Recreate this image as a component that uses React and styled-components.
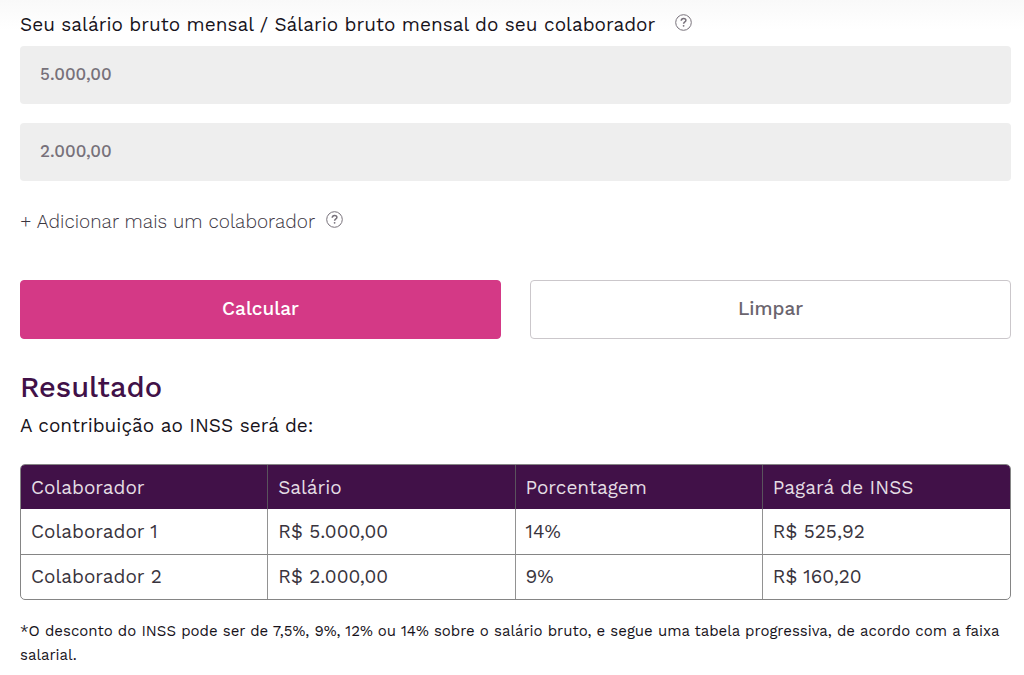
import React, { useState } from 'react';
import styled, { createGlobalStyle } from 'styled-components';

const GlobalStyle = createGlobalStyle`
  *, *::before, *::after { box-sizing: border-box; }
  body {
    margin: 0;
    background: #fff;
    color: #17131b;
    font-family: "Work Sans", Inter, "Open Sans", sans-serif;
    font-size: 19px;
    line-height: 24px;
  }
`;

const Page = styled.main`
  padding: 13px 13px 8px 20px;
  background: linear-gradient(#f9f9f9, #fff 30px);
`;

const LabelRow = styled.div`
  display: flex;
  align-items: flex-start;
  gap: ${({ $gap }) => $gap}px;
`;

const HelpButton = styled.button`
  display: flex;
  margin: 1px 0 0;
  padding: 0;
  border: 0;
  background: none;
  color: #77717a;
  cursor: pointer;
`;

const Fields = styled.div`
  display: flex;
  flex-direction: column;
  gap: 19px;
  margin: 9px 0 29px;
`;

const Field = styled.input`
  width: 100%;
  height: 58px;
  padding: 0 20px 2px;
  border: 0;
  border-radius: 4px;
  background: #eee;
  color: #77717a;
  font: 500 17px/24px "Work Sans", Inter, "Open Sans", sans-serif;
`;

const AddButton = styled.button`
  padding: 0;
  border: 0;
  background: none;
  color: #3b363f;
  font: inherit;
  font-weight: 300;
  cursor: pointer;
`;

const Actions = styled.div`
  display: grid;
  grid-template-columns: 1fr 1fr;
  gap: 29px;
  margin: 46px 0 32px;
`;

const ActionButton = styled.button`
  height: 59px;
  padding: 0 20px 2px;
  border: 1px solid ${({ $primary }) => ($primary ? '#d43986' : '#cbc7cb')};
  border-radius: 4px;
  background: ${({ $primary }) => ($primary ? '#d43986' : '#fff')};
  color: ${({ $primary }) => ($primary ? '#fff' : '#6b656e')};
  font: inherit;
  font-weight: 500;
  cursor: pointer;
`;

const Title = styled.h2`
  margin: 0;
  color: #411148;
  font-size: 29px;
  font-weight: 500;
  line-height: 32px;
`;

const Lead = styled.p`
  margin: 11px 0 26px;
`;

const ResultTable = styled.table`
  width: 100%;
  table-layout: fixed;
  border: 1px solid #858585;
  border-radius: 5px;
  border-spacing: 0;
  overflow: hidden;
  color: #39343d;
  text-align: left;

  th, td {
    height: 45px;
    padding: 0 10px;
    border-right: 1px solid #929292;
  }
  th {
    height: 44px;
    padding-top: 2px;
    border-right-color: #5a535d;
    background: #411148;
    color: #e4dde4;
    font-weight: 400;
  }
  th:last-child, td:last-child { border-right: 0; }
  tr + tr td { border-top: 1px solid #858585; }
`;

const Footnote = styled.p`
  margin: 19px 0 0;
  font-size: 15px;
`;

const HelpIcon = () => (
  <svg width="17" height="17" viewBox="0 0 17 17" fill="none" stroke="currentColor" aria-hidden="true">
    <circle cx="8.5" cy="8.5" r="7.8" strokeWidth="1" />
    <path d="M6.2 6.7C6.3 5.3 7.2 4.5 8.6 4.5C10 4.5 10.9 5.3 10.9 6.4C10.9 8 8.6 7.9 8.6 9.8" strokeWidth="1.5" />
    <circle cx="8.6" cy="11.8" r="0.9" fill="currentColor" stroke="none" />
  </svg>
);

const Help = ({ label }) => (
  <HelpButton type="button" aria-label={label}>
    <HelpIcon />
  </HelpButton>
);

const columns = ['Colaborador', 'Salário', 'Porcentagem', 'Pagará de INSS'];
const results = [
  ['Colaborador 1', 'R$ 5.000,00', '14%', 'R$ 525,92'],
  ['Colaborador 2', 'R$ 2.000,00', '9%', 'R$ 160,20'],
];

export default function App() {
  const [salaries, setSalaries] = useState(['5.000,00', '2.000,00']);

  const updateSalary = (index, value) =>
    setSalaries((current) => current.map((item, i) => (i === index ? value : item)));

  return (
    <>
      <GlobalStyle />
      <Page>
        <form onSubmit={(event) => event.preventDefault()}>
          <LabelRow $gap={20}>
            <label id="salary-label" htmlFor="salary-0">
              Seu salário bruto mensal / Sálario bruto mensal do seu colaborador
            </label>
            <Help label="Ajuda sobre o salário bruto" />
          </LabelRow>
          <Fields>
            {salaries.map((salary, index) => (
              <Field
                key={index}
                id={`salary-${index}`}
                aria-labelledby="salary-label"
                inputMode="decimal"
                value={salary}
                onChange={(event) => updateSalary(index, event.target.value)}
              />
            ))}
          </Fields>
          <LabelRow $gap={11}>
            <AddButton type="button" onClick={() => setSalaries((current) => [...current, ''])}>
              + Adicionar mais um colaborador
            </AddButton>
            <Help label="Ajuda sobre colaboradores" />
          </LabelRow>
          <Actions>
            <ActionButton type="submit" $primary>Calcular</ActionButton>
            <ActionButton type="button" onClick={() => setSalaries((current) => current.map(() => ''))}>
              Limpar
            </ActionButton>
          </Actions>
        </form>
        <section>
          <Title>Resultado</Title>
          <Lead>A contribuição ao INSS será de:</Lead>
          <ResultTable>
            <thead>
              <tr>
                {columns.map((column) => <th key={column} scope="col">{column}</th>)}
              </tr>
            </thead>
            <tbody>
              {results.map((row) => (
                <tr key={row[0]}>
                  {row.map((cell) => <td key={cell}>{cell}</td>)}
                </tr>
              ))}
            </tbody>
          </ResultTable>
          <Footnote>
            *O desconto do INSS pode ser de 7,5%, 9%, 12% ou 14% sobre o salário bruto, e segue uma tabela
            progressiva, de acordo com a faixa salarial.
          </Footnote>
        </section>
      </Page>
    </>
  );
}
